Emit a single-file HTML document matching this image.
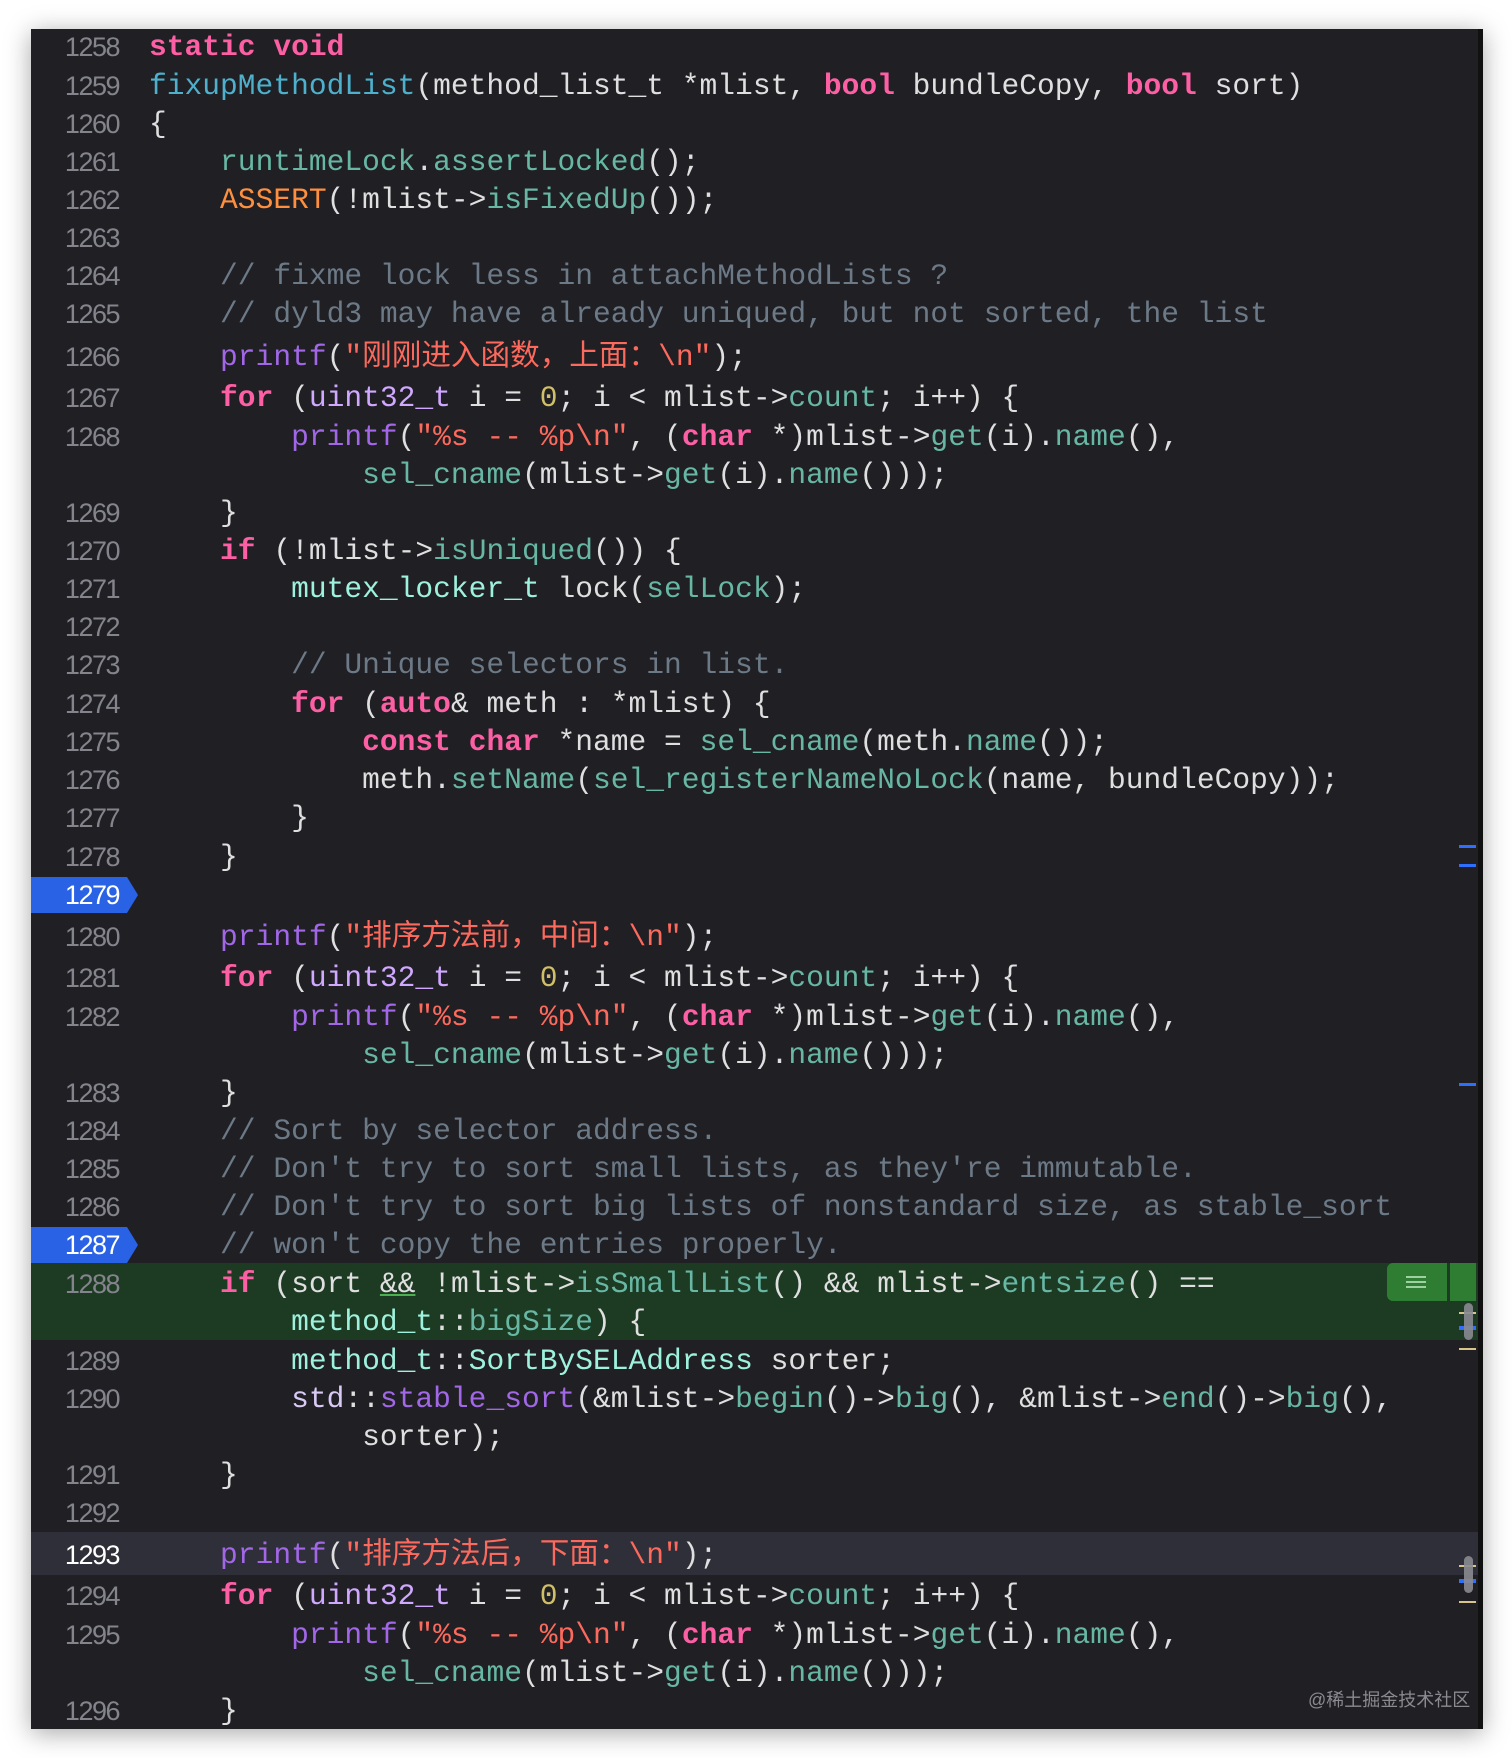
<!DOCTYPE html>
<html><head><meta charset="utf-8"><style>
body{margin:0;width:1512px;height:1758px;background:#fff;position:relative;overflow:hidden}
.panel{position:absolute;left:31px;top:29px;width:1452px;height:1700px;background:#1f1f24;box-shadow:0 4px 24px rgba(0,0,0,.35)}
.r{position:absolute;left:0;width:1452px;height:38px;line-height:38px;white-space:pre;font-family:"Liberation Mono","Noto Sans CJK SC",monospace;font-size:29.6px;color:#dfdfe0;margin-top:2px}
.ln{position:absolute;left:0;width:88px;text-align:right;font-family:"Liberation Sans",sans-serif;font-size:27px;color:#84848c;letter-spacing:-1.5px}
.cd{position:absolute;left:118px}
.k{color:#fc5fa3;font-weight:bold}.f{color:#4eb0cc}.m{color:#67b7a4}.p{color:#a167e6}.s{color:#fc6a5d}.n{color:#d0bf69}.c{color:#6c7986}.o{color:#fd8f3f}.u{color:#d0a8ff}.t{color:#9ef1dd}
.badge{position:absolute;left:0;width:107px;height:36px;background:#2a62e6;clip-path:polygon(0 0,96px 0,107px 50%,96px 100%,0 100%)}
.mk{position:absolute;left:1428px;width:17px}
</style></head><body>
<div class="panel">
<div style="position:absolute;left:0;top:1234px;width:1452px;height:77px;background:#1d3a22"></div>
<div style="position:absolute;left:0;top:1503px;width:1447px;height:43px;background:#2f2f39"></div>
<div style="position:absolute;left:1356px;top:1234px;width:60px;height:38px;background:#2e7d32;border-radius:6px 0 0 6px"></div>
<div style="position:absolute;left:1375px;top:1247px;width:20px;height:2px;background:#9fd09f;box-shadow:0 5px 0 #9fd09f,0 10px 0 #9fd09f"></div>
<div style="position:absolute;left:1419px;top:1234px;width:26px;height:38px;background:#2e7d32"></div>
<div class="mk" style="top:816px;height:3px;background:#2f6fff"></div>
<div class="mk" style="top:835px;height:3px;background:#2f6fff"></div>
<div class="mk" style="top:1054px;height:3px;background:#2f6fff"></div>
<div class="mk" style="top:1283px;height:2px;background:#d8c38a"></div>
<div class="mk" style="top:1297px;height:4px;background:#2f6fff"></div>
<div class="mk" style="top:1319px;height:2px;background:#d8c38a"></div>
<div style="position:absolute;left:1433px;top:1274px;width:9px;height:37px;background:#8a8a90;border-radius:5px;opacity:.9"></div>
<div class="mk" style="top:1536px;height:2px;background:#d8c38a"></div>
<div class="mk" style="top:1550px;height:4px;background:#2f6fff"></div>
<div class="mk" style="top:1572px;height:2px;background:#d8c38a"></div>
<div style="position:absolute;left:1433px;top:1527px;width:9px;height:37px;background:#8a8a90;border-radius:5px;opacity:.9"></div>
<div style="position:absolute;left:1447px;top:0;width:5px;height:1700px;background:#111"></div>

<div class="r" style="top:-3px"><span class="ln">1258</span><span class="cd"><span class="k">static</span> <span class="k">void</span></span></div>
<div class="r" style="top:36px"><span class="ln">1259</span><span class="cd"><span class="f">fixupMethodList</span>(method_list_t *mlist, <span class="k">bool</span> bundleCopy, <span class="k">bool</span> sort)</span></div>
<div class="r" style="top:74px"><span class="ln">1260</span><span class="cd">{</span></div>
<div class="r" style="top:112px"><span class="ln">1261</span><span class="cd">    <span class="m">runtimeLock</span>.<span class="m">assertLocked</span>();</span></div>
<div class="r" style="top:150px"><span class="ln">1262</span><span class="cd">    <span class="o">ASSERT</span>(!mlist-&gt;<span class="m">isFixedUp</span>());</span></div>
<div class="r" style="top:188px"><span class="ln">1263</span></div>
<div class="r" style="top:226px"><span class="ln">1264</span><span class="cd">    <span class="c">// fixme lock less in attachMethodLists ?</span></span></div>
<div class="r" style="top:264px"><span class="ln">1265</span><span class="cd">    <span class="c">// dyld3 may have already uniqued, but not sorted, the list</span></span></div>
<div class="r" style="top:307px"><span class="ln">1266</span><span class="cd">    <span class="p">printf</span>(<span class="s">"刚刚进入函数，上面：\n"</span>);</span></div>
<div class="r" style="top:348px"><span class="ln">1267</span><span class="cd">    <span class="k">for</span> (<span class="u">uint32_t</span> i = <span class="n">0</span>; i &lt; mlist-&gt;<span class="m">count</span>; i++) {</span></div>
<div class="r" style="top:387px"><span class="ln">1268</span><span class="cd">        <span class="p">printf</span>(<span class="s">"%s -- %p\n"</span>, (<span class="k">char</span> *)mlist-&gt;<span class="m">get</span>(i).<span class="m">name</span>(),</span></div>
<div class="r" style="top:425px"><span class="cd">            <span class="m">sel_cname</span>(mlist-&gt;<span class="m">get</span>(i).<span class="m">name</span>()));</span></div>
<div class="r" style="top:463px"><span class="ln">1269</span><span class="cd">    }</span></div>
<div class="r" style="top:501px"><span class="ln">1270</span><span class="cd">    <span class="k">if</span> (!mlist-&gt;<span class="m">isUniqued</span>()) {</span></div>
<div class="r" style="top:539px"><span class="ln">1271</span><span class="cd">        <span class="t">mutex_locker_t</span> lock(<span class="m">selLock</span>);</span></div>
<div class="r" style="top:577px"><span class="ln">1272</span></div>
<div class="r" style="top:615px"><span class="ln">1273</span><span class="cd">        <span class="c">// Unique selectors in list.</span></span></div>
<div class="r" style="top:654px"><span class="ln">1274</span><span class="cd">        <span class="k">for</span> (<span class="k">auto</span>&amp; meth : *mlist) {</span></div>
<div class="r" style="top:692px"><span class="ln">1275</span><span class="cd">            <span class="k">const</span> <span class="k">char</span> *name = <span class="m">sel_cname</span>(meth.<span class="m">name</span>());</span></div>
<div class="r" style="top:730px"><span class="ln">1276</span><span class="cd">            meth.<span class="m">setName</span>(<span class="m">sel_registerNameNoLock</span>(name, bundleCopy));</span></div>
<div class="r" style="top:768px"><span class="ln">1277</span><span class="cd">        }</span></div>
<div class="r" style="top:807px"><span class="ln">1278</span><span class="cd">    }</span></div>
<div class="badge" style="top:848px"></div>
<div class="r" style="top:845px"><span class="ln" style="color:#fff">1279</span></div>
<div class="r" style="top:887px"><span class="ln">1280</span><span class="cd">    <span class="p">printf</span>(<span class="s">"排序方法前，中间：\n"</span>);</span></div>
<div class="r" style="top:928px"><span class="ln">1281</span><span class="cd">    <span class="k">for</span> (<span class="u">uint32_t</span> i = <span class="n">0</span>; i &lt; mlist-&gt;<span class="m">count</span>; i++) {</span></div>
<div class="r" style="top:967px"><span class="ln">1282</span><span class="cd">        <span class="p">printf</span>(<span class="s">"%s -- %p\n"</span>, (<span class="k">char</span> *)mlist-&gt;<span class="m">get</span>(i).<span class="m">name</span>(),</span></div>
<div class="r" style="top:1005px"><span class="cd">            <span class="m">sel_cname</span>(mlist-&gt;<span class="m">get</span>(i).<span class="m">name</span>()));</span></div>
<div class="r" style="top:1043px"><span class="ln">1283</span><span class="cd">    }</span></div>
<div class="r" style="top:1081px"><span class="ln">1284</span><span class="cd">    <span class="c">// Sort by selector address.</span></span></div>
<div class="r" style="top:1119px"><span class="ln">1285</span><span class="cd">    <span class="c">// Don't try to sort small lists, as they're immutable.</span></span></div>
<div class="r" style="top:1157px"><span class="ln">1286</span><span class="cd">    <span class="c">// Don't try to sort big lists of nonstandard size, as stable_sort</span></span></div>
<div class="badge" style="top:1198px"></div>
<div class="r" style="top:1195px"><span class="ln" style="color:#fff">1287</span><span class="cd">    <span class="c">// won't copy the entries properly.</span></span></div>
<div class="r" style="top:1234px"><span class="ln">1288</span><span class="cd">    <span class="k">if</span> (sort <span style="text-decoration:underline;text-decoration-color:#4caf50">&amp;&amp;</span> !mlist-&gt;<span class="m">isSmallList</span>() &amp;&amp; mlist-&gt;<span class="m">entsize</span>() ==</span></div>
<div class="r" style="top:1272px"><span class="cd">        <span class="t">method_t</span>::<span class="m">bigSize</span>) {</span></div>
<div class="r" style="top:1311px"><span class="ln">1289</span><span class="cd">        <span class="t">method_t</span>::<span class="t">SortBySELAddress</span> sorter;</span></div>
<div class="r" style="top:1349px"><span class="ln">1290</span><span class="cd">        <span style="color:#d9c9f5">std</span>::<span class="p">stable_sort</span>(&amp;mlist-&gt;<span class="m">begin</span>()-&gt;<span class="m">big</span>(), &amp;mlist-&gt;<span class="m">end</span>()-&gt;<span class="m">big</span>(),</span></div>
<div class="r" style="top:1387px"><span class="cd">            sorter);</span></div>
<div class="r" style="top:1425px"><span class="ln">1291</span><span class="cd">    }</span></div>
<div class="r" style="top:1463px"><span class="ln">1292</span></div>
<div class="r" style="top:1505px"><span class="ln" style="color:#fff">1293</span><span class="cd">    <span class="p">printf</span>(<span class="s">"排序方法后，下面：\n"</span>);</span></div>
<div class="r" style="top:1546px"><span class="ln">1294</span><span class="cd">    <span class="k">for</span> (<span class="u">uint32_t</span> i = <span class="n">0</span>; i &lt; mlist-&gt;<span class="m">count</span>; i++) {</span></div>
<div class="r" style="top:1585px"><span class="ln">1295</span><span class="cd">        <span class="p">printf</span>(<span class="s">"%s -- %p\n"</span>, (<span class="k">char</span> *)mlist-&gt;<span class="m">get</span>(i).<span class="m">name</span>(),</span></div>
<div class="r" style="top:1623px"><span class="cd">            <span class="m">sel_cname</span>(mlist-&gt;<span class="m">get</span>(i).<span class="m">name</span>()));</span></div>
<div class="r" style="top:1661px"><span class="ln">1296</span><span class="cd">    }</span></div>
<div style="position:absolute;left:1277px;top:1657px;font-family:'Liberation Sans','Noto Sans CJK SC',sans-serif;font-size:18px;color:#8a8a90">@稀土掘金技术社区</div>
</div>
</body></html>
